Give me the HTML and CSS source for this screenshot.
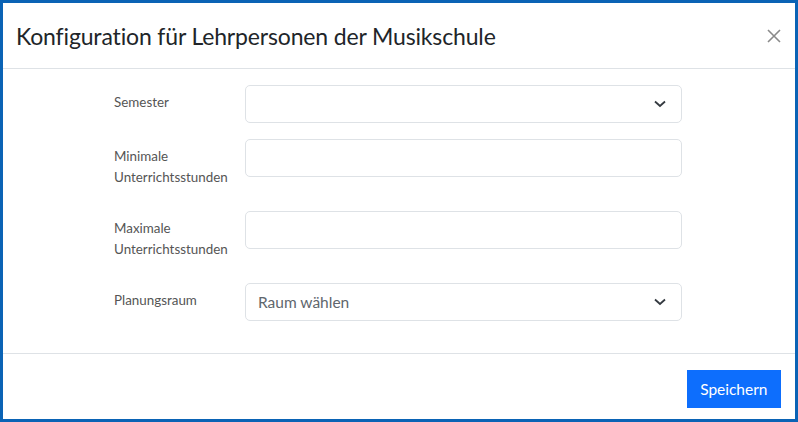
FILE: index.html
```html
<!DOCTYPE html>
<html lang="de">
<head>
    <meta charset="UTF-8">
    <meta name="viewport" content="width=device-width, initial-scale=1.0">
    <title>Konfiguration für Lehrpersonen der Musikschule</title>
    <link rel="stylesheet" href="styles.css">
</head>
<body>
    <div class="modal">
        <div class="modal-header">
            <h5 class="modal-title">Konfiguration für Lehrpersonen der Musikschule</h5>
            <button type="button" class="btn-close" aria-label="Schliessen">
                <svg width="14" height="14" viewBox="0 0 14 14">
                    <path d="M1 1 L13 13 M13 1 L1 13" stroke="#8a8a8a" stroke-width="1.6" fill="none"/>
                </svg>
            </button>
        </div>
        <div class="modal-body">
            <form class="config-form">
                <label class="form-label" for="semester">Semester</label>
                <div class="select-box" id="semester">
                    <span class="select-text"></span>
                    <svg class="chevron" width="12" height="8" viewBox="0 0 12 8">
                        <path d="M1 1.5 L6 6 L11 1.5" stroke="#343a40" stroke-width="1.8" fill="none"/>
                    </svg>
                </div>

                <label class="form-label" for="min-hours">Minimale Unterrichtsstunden</label>
                <input type="text" class="form-input" id="min-hours">

                <label class="form-label" for="max-hours">Maximale Unterrichtsstunden</label>
                <input type="text" class="form-input" id="max-hours">

                <label class="form-label" for="room">Planungsraum</label>
                <div class="select-box" id="room">
                    <span class="select-text">Raum wählen</span>
                    <svg class="chevron" width="12" height="8" viewBox="0 0 12 8">
                        <path d="M1 1.5 L6 6 L11 1.5" stroke="#343a40" stroke-width="1.8" fill="none"/>
                    </svg>
                </div>
            </form>
        </div>
        <div class="modal-footer">
            <button type="button" class="btn-save">Speichern</button>
        </div>
    </div>
</body>
</html>
```

FILE: styles.css
```css
* {
    box-sizing: border-box;
}

body {
    margin: 0;
    font-family: "Lato", "Noto Sans", sans-serif;
    color: #212529;
    background: #ffffff;
}

.modal {
    width: 798px;
    height: 422px;
    border: 3px solid #0a63b5;
    overflow: hidden;
    background: #ffffff;
}

.modal-header {
    display: flex;
    align-items: center;
    justify-content: space-between;
    height: 66px;
    padding: 0 14px 0 13px;
    border-bottom: 1px solid #dee2e6;
}

.modal-title {
    margin: 0;
    font-size: 23px;
    font-weight: 400;
    line-height: 32px;
    letter-spacing: -0.15px;
    color: #212529;
}

.btn-close {
    display: flex;
    padding: 0;
    border: none;
    background: none;
    cursor: pointer;
}

.modal-body {
    padding: 16px 113px 16px 111px;
    border-bottom: 1px solid #dee2e6;
}

.config-form {
    display: grid;
    grid-template-columns: 131px 1fr;
    align-items: start;
}

.form-label {
    padding: 7px 0;
    margin-bottom: 16px;
    font-size: 13.4px;
    line-height: 21px;
    color: #555555;
}

.form-input,
.select-box {
    height: 38px;
    margin-bottom: 16px;
    border: 1px solid #dee2e6;
    border-radius: 5px;
    font-family: inherit;
    font-size: 16px;
    background: #ffffff;
}

.select-box {
    display: flex;
    align-items: center;
    justify-content: space-between;
    padding: 0 15px 0 12px;
}

.select-text {
    color: #60666d;
    font-size: 15.5px;
}

.modal-footer {
    display: flex;
    justify-content: flex-end;
    padding: 16px 14px 0 0;
}

.btn-save {
    height: 38px;
    padding: 0 13.5px;
    border: none;
    border-radius: 0;
    background: #0d6efd;
    color: #ffffff;
    font-family: inherit;
    font-size: 15.5px;
    cursor: pointer;
}
```
